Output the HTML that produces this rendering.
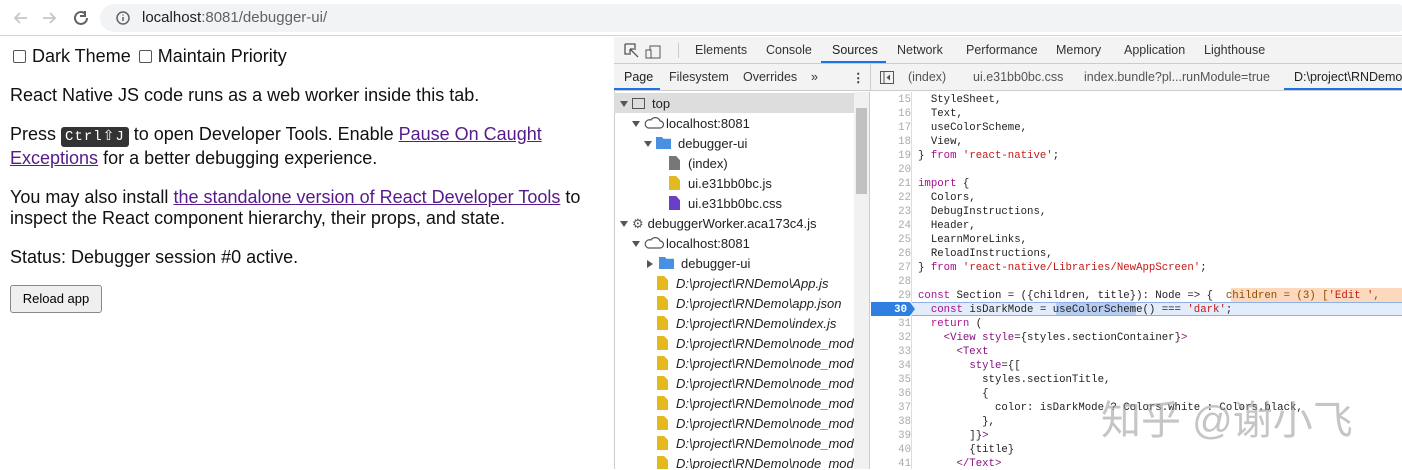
<!DOCTYPE html>
<html><head><meta charset="utf-8"><style>
*{box-sizing:border-box;margin:0;padding:0}
body{width:1402px;height:469px;overflow:hidden;background:#fff;font-family:"Liberation Sans",Arial,sans-serif;position:relative}
.abs{position:absolute}
.top{left:0;top:0;width:1402px;height:36px;background:#fff;border-bottom:1px solid #d0d3d8}
.url{left:100px;top:4px;width:1310px;height:28px;background:#f1f3f4;border-radius:14px;font-size:15px;color:#202124;padding:5px 0 0 42px}
.url span{color:#5f6368}
.page{left:10px;top:46px;width:600px;font-size:18px;color:#111;line-height:21px}
.page p{margin-bottom:18px}
a{color:#551a8b;text-decoration:underline}
kbd{background:#333;color:#fff;font-family:"Liberation Mono",monospace;font-size:14px;padding:2px 4px;border-radius:3px;letter-spacing:1px}
.cb{display:inline-block;width:13px;height:13px;border:1px solid #555;border-radius:2px;vertical-align:-1px;margin:0 6px 0 3px}
.btn{left:10px;top:285px;width:92px;height:28px;border:1px solid #888;border-radius:3px;background:#efefef;font-size:13px;text-align:center;line-height:26px;color:#000}
.dt{left:614px;top:37px;width:788px;height:432px;background:#fff;border-left:1px solid #ccc}
.bar1{left:614px;top:37px;width:788px;height:27px;background:#f3f3f3;border-bottom:1px solid #ccc;font-size:12.5px;color:#333}
.bar1 span{position:absolute;top:6px}
.bar2{left:614px;top:64px;width:788px;height:27px;background:#f3f3f3;border-bottom:1px solid #ccc;font-size:12.5px;color:#333}
.bar2 span{position:absolute;top:6px}
.side{left:614px;top:92px;width:256px;height:377px;border-right:1px solid #ccc;font-size:13px;color:#222;overflow:hidden}
.row{position:absolute;height:20px;line-height:22px;white-space:nowrap}
.fi{display:inline-block;width:11px;height:14px;vertical-align:-2px;margin-right:8px;clip-path:polygon(0 0,65% 0,100% 30%,100% 100%,0 100%)}
.fo{display:inline-block;width:15px;height:12px;background:#4a90e2;vertical-align:-1px;margin-right:7px;clip-path:polygon(0 0,40% 0,50% 15%,100% 15%,100% 100%,0 100%)}
.tri{display:inline-block;width:0;height:0;border-left:4px solid transparent;border-right:4px solid transparent;border-top:6px solid #555;margin-right:4px;vertical-align:1px}
.trir{display:inline-block;width:0;height:0;border-top:4px solid transparent;border-bottom:4px solid transparent;border-left:6px solid #555;margin-right:6px;vertical-align:0}
.code{left:871px;top:92px;width:531px;height:377px;font-family:"Liberation Mono",monospace;font-size:10.7px;color:#222}
.ln{position:absolute;left:0;width:40px;text-align:right;color:#aaa}
.cl{position:absolute;left:47px;white-space:pre}
.k{color:#aa0d91}.s{color:#c41a16}.t{color:#881280}
</style></head><body>
<div class="abs top"></div>
<svg class="abs" style="left:12px;top:10px" width="80" height="16" viewBox="0 0 80 16">
<path d="M15 8H3M8 3L3 8l5 5" stroke="#c4c7c9" stroke-width="1.8" fill="none"/>
<path d="M31 8h12M38 3l5 5-5 5" stroke="#c4c7c9" stroke-width="1.8" fill="none"/>
<path d="M80 8a6 6 0 1 1-2-4.5" stroke="#5f6368" stroke-width="2" fill="none" transform="translate(-5,0)"/>
<path d="M74 1v5h-5" stroke="#5f6368" stroke-width="2" fill="none" transform="translate(-1,0)"/>
</svg>
<div class="abs url"><svg class="abs" style="left:16px;top:7px" width="14" height="14"><circle cx="7" cy="7" r="6" stroke="#5f6368" stroke-width="1.5" fill="none"/><path d="M7 6v4M7 3.5v1" stroke="#5f6368" stroke-width="1.5"/></svg>localhost<span>:8081/debugger-ui/</span></div>

<div class="abs page">
<p><span class="cb"></span>Dark Theme <span class="cb"></span>Maintain Priority</p>
<p>React Native JS code runs as a web worker inside this tab.</p>
<p>Press <kbd>Ctrl⇧J</kbd> to open Developer Tools. Enable <a>Pause On Caught Exceptions</a> for a better debugging experience.</p>
<p>You may also install <a>the standalone version of React Developer Tools</a> to inspect the React component hierarchy, their props, and state.</p>
<p>Status: Debugger session #0 active.</p>
</div>
<div class="abs btn">Reload app</div>

<div class="abs dt"></div>
<div class="abs bar1">
<svg class="abs" style="left:10px;top:6px" width="40" height="16"><path d="M1 1h10v4M1 1v10h4M6 6l8 8M6 6v6M6 6h6" stroke="#555" stroke-width="1.3" fill="none"/><rect x="26" y="3" width="10" height="12" stroke="#555" fill="none"/><rect x="22" y="7" width="5" height="8" stroke="#555" fill="#f3f3f3"/></svg>
<div class="abs" style="left:64px;top:6px;width:1px;height:15px;background:#ccc"></div>
<span style="left:81px">Elements</span><span style="left:152px">Console</span><span style="left:218px;color:#222">Sources</span><span style="left:283px">Network</span><span style="left:352px">Performance</span><span style="left:442px">Memory</span><span style="left:510px">Application</span><span style="left:590px">Lighthouse</span>
<div class="abs" style="left:207px;top:24px;width:65px;height:2px;background:#1a73e8"></div>
</div>
<div class="abs bar2">
<span style="left:10px;color:#222">Page</span><span style="left:55px">Filesystem</span><span style="left:129px">Overrides</span><span style="left:197px">»</span><span style="left:238px;font-weight:bold">⋮</span>
<div class="abs" style="left:0;top:24px;width:46px;height:2px;background:#1a73e8"></div>
<div class="abs" style="left:256px;top:0;width:1px;height:27px;background:#ccc"></div>
<svg class="abs" style="left:266px;top:7px" width="14" height="13"><rect x="0.5" y="0.5" width="13" height="12" stroke="#555" fill="none"/><path d="M4 1v11" stroke="#555"/><path d="M10 3.5L6.5 6.5 10 9.5z" fill="#555"/></svg>
<span style="left:294px;color:#555">(index)</span><span style="left:359px;color:#555">ui.e31bb0bc.css</span><span style="left:470px;color:#555">index.bundle?pl...runModule=true</span><span style="left:680px;color:#222">D:\project\RNDemo\</span>
<div class="abs" style="left:670px;top:24px;width:118px;height:2px;background:#1a73e8"></div>
</div>

<div class="abs side">
<div class="abs" style="left:0;top:1px;width:240px;height:20px;background:#ddd"></div>
<div class="row" style="left:6px;top:1px"><span class="tri"></span><span style="display:inline-block;width:13px;height:11px;border:1.5px solid #555;margin-right:7px;vertical-align:-1px"></span>top</div>
<div class="row" style="left:18px;top:21px"><span class="tri"></span><svg width="20" height="12" style="vertical-align:-1px;margin-right:2px"><path d="M4 11h12a3.5 3.5 0 0 0 0-7 5 5 0 0 0-9-1A4 4 0 0 0 4 11z" stroke="#555" fill="none" stroke-width="1.2"/></svg>localhost:8081</div>
<div class="row" style="left:30px;top:41px"><span class="tri"></span><span class="fo"></span>debugger-ui</div>
<div class="row" style="left:55px;top:61px"><span class="fi" style="background:#777"></span>(index)</div>
<div class="row" style="left:55px;top:81px"><span class="fi" style="background:#e3b91f"></span>ui.e31bb0bc.js</div>
<div class="row" style="left:55px;top:101px"><span class="fi" style="background:#6a3fc8"></span>ui.e31bb0bc.css</div>
<div class="row" style="left:6px;top:121px"><span class="tri"></span><span style="color:#555;margin-right:4px">⚙</span>debuggerWorker.aca173c4.js</div>
<div class="row" style="left:18px;top:141px"><span class="tri"></span><svg width="20" height="12" style="vertical-align:-1px;margin-right:2px"><path d="M4 11h12a3.5 3.5 0 0 0 0-7 5 5 0 0 0-9-1A4 4 0 0 0 4 11z" stroke="#555" fill="none" stroke-width="1.2"/></svg>localhost:8081</div>
<div class="row" style="left:33px;top:161px"><span class="trir"></span><span class="fo"></span>debugger-ui</div>
<div class="row" style="left:43px;top:181px;font-style:italic"><span class="fi" style="background:#e3b91f"></span>D:\project\RNDemo\App.js</div>
<div class="row" style="left:43px;top:201px;font-style:italic"><span class="fi" style="background:#e3b91f"></span>D:\project\RNDemo\app.json</div>
<div class="row" style="left:43px;top:221px;font-style:italic"><span class="fi" style="background:#e3b91f"></span>D:\project\RNDemo\index.js</div>
<div class="row" style="left:43px;top:241px;font-style:italic"><span class="fi" style="background:#e3b91f"></span>D:\project\RNDemo\node_module</div>
<div class="row" style="left:43px;top:261px;font-style:italic"><span class="fi" style="background:#e3b91f"></span>D:\project\RNDemo\node_module</div>
<div class="row" style="left:43px;top:281px;font-style:italic"><span class="fi" style="background:#e3b91f"></span>D:\project\RNDemo\node_module</div>
<div class="row" style="left:43px;top:301px;font-style:italic"><span class="fi" style="background:#e3b91f"></span>D:\project\RNDemo\node_module</div>
<div class="row" style="left:43px;top:321px;font-style:italic"><span class="fi" style="background:#e3b91f"></span>D:\project\RNDemo\node_module</div>
<div class="row" style="left:43px;top:341px;font-style:italic"><span class="fi" style="background:#e3b91f"></span>D:\project\RNDemo\node_module</div>
<div class="row" style="left:43px;top:361px;font-style:italic"><span class="fi" style="background:#e3b91f"></span>D:\project\RNDemo\node_module</div>
<div class="abs" style="left:240px;top:0;width:15px;height:377px;background:#f1f1f1"></div>
<div class="abs" style="left:242px;top:16px;width:11px;height:86px;background:#c1c1c1"></div>
</div>

<div class="abs code">
<div class="abs" style="left:40px;top:0;width:1px;height:377px;background:#ddd"></div>
<div class="abs" style="left:41px;top:210px;width:490px;height:14px;background:#e3ecfa;border-top:1px solid #8fb0e6;border-bottom:1px solid #8fb0e6"></div>
<div class="abs" style="left:0;top:210px;width:44px;height:14px;background:#2f7fe0;clip-path:polygon(0 0,88% 0,100% 50%,88% 100%,0 100%)"></div>
<div class="abs" style="left:185px;top:211px;width:80px;height:12px;background:#b6cdf0"></div>
<div class="abs" style="left:360px;top:196px;width:171px;height:14px;background:#fcd9bc"></div>
<div id="c" class="abs" style="left:0;top:2px"></div>
<div class="abs" style="left:230px;top:296px;font-family:'Liberation Sans','Noto Sans CJK SC',sans-serif;font-size:40px;color:rgba(150,150,150,.55);white-space:nowrap">知乎 @谢小飞</div>
</div>
<script>
var L=[
[15,'  StyleSheet,'],[16,'  Text,'],[17,'  useColorScheme,'],[18,'  View,'],
[19,'} <span class="k">from</span> <span class="s">\'react-native\'</span>;'],[20,''],
[21,'<span class="k">import</span> {'],[22,'  Colors,'],[23,'  DebugInstructions,'],[24,'  Header,'],[25,'  LearnMoreLinks,'],[26,'  ReloadInstructions,'],
[27,'} <span class="k">from</span> <span class="s">\'react-native/Libraries/NewAppScreen\'</span>;'],[28,''],
[29,'<span class="k">const</span> Section = ({children, title}): Node => {  <span style="color:#8a4b00">children = (3) [<span class="s">\'Edit \'</span>, </span>'],
[30,'  <span class="k">const</span> isDarkMode = useColorScheme() === <span class="s">\'dark\'</span>;'],
[31,'  <span class="k">return</span> ('],[32,'    <span class="t">&lt;View</span> <span class="t">style</span>={styles.sectionContainer}<span class="t">&gt;</span>'],
[33,'      <span class="t">&lt;Text</span>'],[34,'        <span class="t">style</span>={['],[35,'          styles.sectionTitle,'],[36,'          {'],
[37,'            color: isDarkMode ? Colors.white : Colors.black,'],[38,'          },'],[39,'        ]}<span class="t">&gt;</span>'],[40,'        {title}'],[41,'      <span class="t">&lt;/Text&gt;</span>']];
var h='';L.forEach(function(l,i){var y=i*14;h+='<div class="ln" style="top:'+y+'px;'+(l[0]==30?'color:#fff;font-weight:bold;width:36px':'')+'">'+l[0]+'</div><div class="cl" style="top:'+y+'px">'+l[1]+'</div>';});
document.getElementById('c').innerHTML=h;
</script>
</body></html>
